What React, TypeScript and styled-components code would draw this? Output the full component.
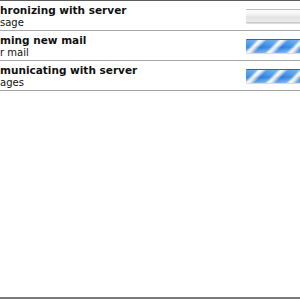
import styled, { createGlobalStyle } from "styled-components";

const GlobalStyle = createGlobalStyle`
  html, body {
    margin: 0;
    padding: 0;
    background: #ffffff;
  }
`;

const activities = [
  { title: "hronizing with server", detail: "sage", busy: false },
  { title: "ming new mail", detail: "r mail", busy: true },
  { title: "municating with server", detail: "ages", busy: true },
];

const App = () => {
  return (
    <>
      <GlobalStyle />
      <ActivityWindow>
        <ActivityList>
          {activities.map((item) => (
            <ActivityRow key={item.title}>
              <ActivityText>
                <span className="title">{item.title}</span>
                <span className="detail">{item.detail}</span>
              </ActivityText>
              <ProgressBar $busy={item.busy} />
            </ActivityRow>
          ))}
        </ActivityList>
        <BottomEdge />
      </ActivityWindow>
    </>
  );
};

const ActivityWindow = styled.div`
  width: 300px;
  height: 300px;
  display: flex;
  flex-direction: column;
  overflow: hidden;
  background: #ffffff;
  border-top: 1px solid #5c5c5c;
  box-sizing: border-box;
  font-family: "DejaVu Sans", "Liberation Sans", sans-serif;
  color: #111111;
`;

const ActivityList = styled.div`
  flex: 1;
  display: flex;
  flex-direction: column;
`;

const ActivityRow = styled.div`
  height: 29px;
  display: flex;
  align-items: center;
  border-bottom: 1px solid #a6a6a6;
`;

const ActivityText = styled.div`
  flex: 1;
  display: flex;
  flex-direction: column;
  padding-top: 1px;
  white-space: nowrap;

  .title {
    font-size: 10.5px;
    font-weight: 700;
    line-height: 13px;
  }

  .detail {
    font-size: 10px;
    line-height: 12px;
  }
`;

const ProgressBar = styled.div<{ $busy: boolean }>`
  width: 70px;
  height: 14px;
  margin-right: -16px;
  flex-shrink: 0;
  border-radius: 1px;
  box-sizing: border-box;
  box-shadow: 0 1px 1px rgba(0, 0, 0, 0.15);
  ${({ $busy }) =>
    $busy
      ? `
    border-top: 1px solid #3a5cc0;
    background:
      linear-gradient(
        to bottom,
        rgba(255, 255, 255, 0.3) 0%,
        rgba(255, 255, 255, 0.05) 45%,
        rgba(0, 0, 0, 0.04) 55%,
        rgba(255, 255, 255, 0.35) 100%
      ),
      repeating-linear-gradient(
        135deg,
        #2a80e2 0px,
        #3f95ec 7px,
        #ffffff 10px,
        #d7dde6 12px,
        #2a80e2 15px
      );
  `
      : `
    border-top: 1px solid #bcbcbc;
    border-bottom: 1px solid #c8c8c8;
    background: linear-gradient(
      to bottom,
      #fbfbfb 0%,
      #f4f4f4 35%,
      #e2e2e2 60%,
      #ececec 100%
    );
  `}
`;

const BottomEdge = styled.div`
  height: 2px;
  margin-bottom: 1px;
  background: #7a7a7a;
`;

export default App;
